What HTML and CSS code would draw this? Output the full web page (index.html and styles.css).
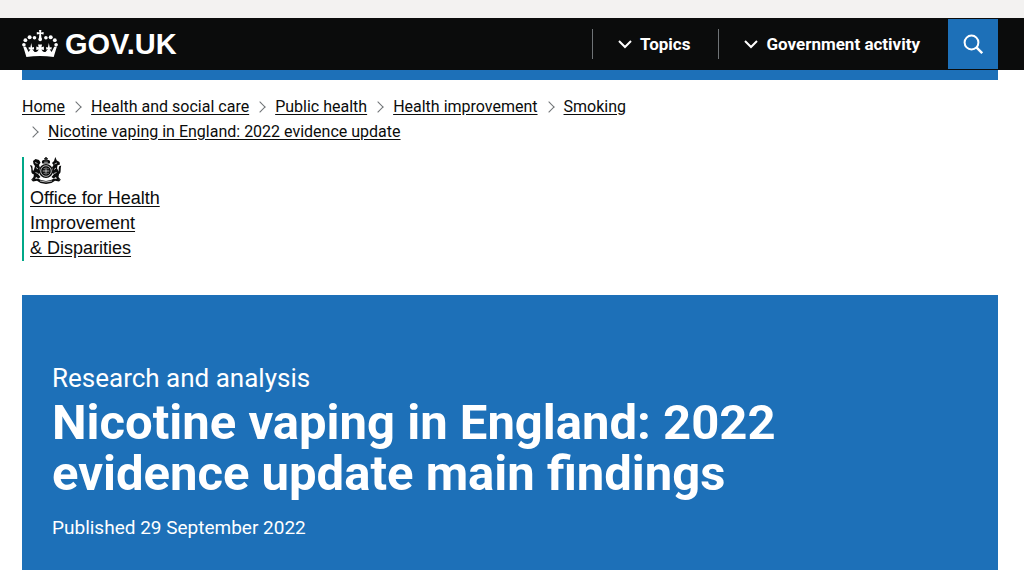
FILE: index.html
```
<!DOCTYPE html>
<html lang="en">
<head>
  <meta charset="UTF-8" />
  <meta name="viewport" content="width=device-width, initial-scale=1" />
  <title>Nicotine vaping in England: 2022 evidence update main findings - GOV.UK</title>
  <link rel="stylesheet" href="styles.css">
</head>
<body>

<div class="top-strip"></div>

<header class="header">
  <div class="wrapper header-row">
    <a class="logo" href="#">
      <svg class="crown" viewBox="0 0 36 28" aria-hidden="true">
        <g fill="#fff">
          <path d="M17 0h2.400l-.4 2.500 2.600-.4v2.400l-2.600-.4.7 5.400h-3l.7-5.400-2.600.4V2.100l2.600.4z"/>
          <circle cx="18.200" cy="9.400" r="1.800"/>
          <circle cx="12.500" cy="7.800" r="1.800"/>
          <circle cx="7.600" cy="7.300" r="2"/>
          <circle cx="3.400" cy="10.200" r="1.900"/>
          <circle cx="1.900" cy="14.700" r="1.800"/>
          <circle cx="23.900" cy="7.800" r="1.800"/>
          <circle cx="28.700" cy="7.300" r="2"/>
          <circle cx="32.800" cy="10.200" r="1.900"/>
          <circle cx="34.100" cy="14.700" r="1.800"/>
          <path d="M1.200 16.500l2.800.2 2.600 5.300 1.900-2.800-1.800.4v-2.500l1.700.5L9.200 13l1 4.600 1.800-.5v2.500l-1.800-.4 2.400 2.800c2 0 3.400-.9 4.200-2.600l-2.500.6v-3.600l2.400.9-.7-2.800h4.100l-.7 2.800 2.500-.9V20l-2.500-.6c.8 1.700 2.100 2.600 4.100 2.600l2.400-2.800-1.700.4v-2.500l1.700.5.900-4.600 1 4.600 1.800-.5v2.500l-1.900-.4 1.900 2.800 2.600-5.300 2.700-.2-3.200 10.400c-8.900-1.200-18.500-1.200-27.300 0z"/>
        </g>
      </svg>
      <span>GOV.UK</span>
    </a>
    <nav class="nav" aria-label="Menu">
      <button class="nav-button" type="button">
        <svg class="chevron" viewBox="0 0 14 9" aria-hidden="true"><path d="M1 1l6 6 6-6" fill="none" stroke="currentColor" stroke-width="2"/></svg>
        Topics
      </button>
      <button class="nav-button" type="button">
        <svg class="chevron" viewBox="0 0 14 9" aria-hidden="true"><path d="M1 1l6 6 6-6" fill="none" stroke="currentColor" stroke-width="2"/></svg>
        Government activity
      </button>
      <button class="search-button" type="button" aria-label="Search GOV.UK">
        <svg viewBox="0 0 20 20" aria-hidden="true"><circle cx="8.500" cy="8.500" r="6.900" fill="none" stroke="#fff" stroke-width="2"/><path d="M13.200 13.200l6 6" stroke="#fff" stroke-width="2.400"/></svg>
      </button>
    </nav>
  </div>
</header>

<div class="wrapper">
  <div class="blue-bar"></div>

  <nav aria-label="Breadcrumb">
    <ol class="breadcrumbs">
      <li><a href="#">Home</a></li>
      <li><a href="#">Health and social care</a></li>
      <li><a href="#">Public health</a></li>
      <li><a href="#">Health improvement</a></li>
      <li><a href="#">Smoking</a></li>
      <li><a href="#">Nicotine vaping in England: 2022 evidence update</a></li>
    </ol>
  </nav>

  <a class="organisation" href="#">
    <svg class="crest" viewBox="0 0 32 27" aria-hidden="true">
      <g fill="#0b0c0c">
        <!-- lion -->
        <path d="M3 4l2.500-2L9 3l1.500 2.500L9 8l1 3-1 2 1.500 2.500L8 17l2.500 3-2 1.500L6 20l-1 2.500H1.500L3.500 20l.5-3-1.500-2L4 12.500 5 9 3.500 7z"/>
        <path d="M4 17.500C0 16.500 2 13 1 10.500L0 8l2.200.8C3 12 2 14.500 5 15.500z"/>
        <!-- unicorn -->
        <path d="M25.300 0l1.500 3.500L29.500 5l.5 2.500-2.500.8-.5 3 1.500 2.700.5 3.500-.5 2.500 2 2.500H27L26 20l-2.500 1.500-2-1.500L24 17l-2.500-1.500L23 13l-1-2.500L23.500 8 22 6l2-2z"/>
        <path d="M28 17.500c4-1 2-4.500 3.200-9l-2 .8c-1 3 .3 5.200-2 6.500z"/>
        <!-- shield -->
        <circle cx="16" cy="14" r="7"/>
        <!-- crown -->
        <path d="M15.300 0h1.400v1.200H18v1.200h-1.300v1C19 2.400 21 3.600 19.700 6.500h-7.400C11 3.600 13 2.400 15.300 3.400v-1H14V1.200h1.300z"/>
        <!-- motto -->
        <path d="M1 22.500l7-1 3 1.500 5 1 5-1 3-1.500 7 1-2 2-4-.7-3.500 2.200-5.500 1-5.500-1L7 23.800l-4 .7z"/>
      </g>
      <g fill="none" stroke="#fff" stroke-width=".7">
        <circle cx="16" cy="14" r="5.300"/>
        <path d="M16 10.500v7M12.700 14h6.600M13.700 11.700h1M17.500 11.700h1M13.700 16.300h1M17.500 16.300h1"/>
        <path d="M5 5.500l2.500 1M6 10.500l2 1.500M5.500 15.500l2.500 1M27 6l-2.500 1M26 11l-2 1.500M26.500 15.500l-2.500 1M14.200 5.200h3.600M10 24l6 1 6-1"/>
      </g>
    </svg>
    <span>Office for Health<br>Improvement<br>&amp; Disparities</span>
  </a>

  <main class="banner">
    <p class="context">Research and analysis</p>
    <h1>Nicotine vaping in England: 2022 evidence update main findings</h1>
    <p class="published">Published 29 September 2022</p>
  </main>
</div>

</body>
</html>
```
FILE: styles.css
```
* {
  box-sizing: border-box;
}

body {
  margin: 0;
  background: #fff;
  color: #0b0c0c;
  font-family: Roboto, Arial, sans-serif;
}

a {
  color: #0b0c0c;
}

button {
  border: none;
  color: #fff;
  font-family: inherit;
  cursor: pointer;
}

.wrapper {
  padding: 0 26px 0 22px;
}

.top-strip {
  height: 18px;
  background: #f3f2f1;
}

.header {
  background: #0b0c0c;
}

.header-row {
  display: flex;
  justify-content: space-between;
  align-items: center;
  height: 52px;
}

.logo {
  display: flex;
  align-items: center;
  gap: 7px;
  color: #fff;
  font-family: "Liberation Sans", Arial, sans-serif;
  font-size: 29px;
  font-weight: bold;
  line-height: 34px;
  text-decoration: none;
}

.crown {
  width: 36px;
  height: 28px;
}

.nav {
  display: flex;
  align-items: center;
}

.nav-button {
  display: flex;
  align-items: center;
  gap: 8px;
  height: 30px;
  padding: 0 28px 0 25px;
  border-left: 1px solid #6f7376;
  background: none;
  font-size: 17px;
  font-weight: bold;
}

.chevron {
  width: 14px;
  height: 9px;
}

.search-button {
  display: flex;
  align-items: center;
  justify-content: center;
  width: 50px;
  height: 50px;
  padding: 0;
  background: #1d70b8;
}

.search-button svg {
  width: 20px;
  height: 20px;
}

.blue-bar {
  height: 10px;
  background: #1d70b8;
}

.breadcrumbs {
  display: flex;
  flex-wrap: wrap;
  max-width: 640px;
  margin: 14px 0 13px;
  padding: 0;
  list-style: none;
  font-size: 16px;
  line-height: 25px;
}

.breadcrumbs li {
  display: flex;
  align-items: center;
}

.breadcrumbs li + li::before {
  content: "";
  width: 7px;
  height: 7px;
  margin: 0 11px 0 7px;
  border: solid #6f7376;
  border-width: 1px 1px 0 0;
  transform: rotate(45deg);
}

.breadcrumbs a {
  text-underline-offset: 2px;
}

.organisation {
  display: block;
  width: fit-content;
  padding-left: 6px;
  border-left: 2px solid #00a888;
  font-family: "Liberation Sans", Arial, sans-serif;
  font-size: 18px;
  line-height: 25px;
  text-underline-offset: 2px;
}

.crest {
  display: block;
  width: 32px;
  height: 27px;
  margin-bottom: 2px;
}

.banner {
  margin-top: 34px;
  padding: 65px 30px 30px;
  background: #1d70b8;
  color: #fff;
}

.banner p,
.banner h1 {
  margin: 0;
}

.banner .context {
  font-size: 26px;
  line-height: 36px;
}

.banner h1 {
  max-width: 780px;
  padding: 1px 0 16px;
  font-size: 49px;
  line-height: 51px;
}

.banner .published {
  font-size: 19px;
  line-height: 25px;
}
```
